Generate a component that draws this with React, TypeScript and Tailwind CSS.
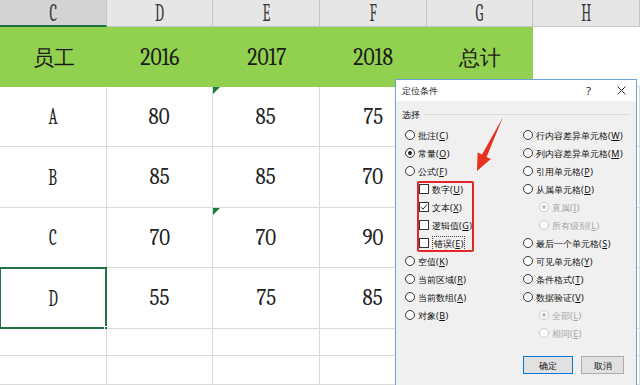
import React from "react";

function Tri() {
  return (
    <svg className="absolute left-0 top-0" width="7" height="7" viewBox="0 0 7 7">
      <polygon points="0,0 7,0 0,7" fill="#1f7a35" />
    </svg>
  );
}

function Cell({ v, tri, sel }: { v?: string; tri?: boolean; sel?: boolean }) {
  const isLetter = v !== undefined && /^[A-D]$/.test(v);
  return (
    <div className="relative flex items-center justify-center bg-white border-r border-b border-[#dadada]">
      {tri && <Tri />}
      {v !== undefined &&
        (isLetter ? (
          <span className="font-serif text-[23px] leading-none text-[#222] inline-block scale-x-65">{v}</span>
        ) : (
          <span className="font-serif text-[22px] leading-none text-[#222] inline-block scale-x-95">{v}</span>
        ))}
      {sel && (
        <>
          <div className="absolute -left-px -top-px -right-px -bottom-px border-2 border-[#217346]" />
          <div className="absolute -right-[3px] -bottom-[3px] w-[5px] h-[5px] bg-[#217346] border border-white" />
        </>
      )}
    </div>
  );
}

function Radio({ checked, disabled }: { checked?: boolean; disabled?: boolean }) {
  return (
    <span
      className={`flex items-center justify-center w-[10px] h-[10px] rounded-full border bg-white shrink-0 ${
        disabled ? "border-[#c8c8c8]" : "border-[#333]"
      }`}
    >
      {checked && <span className={`w-[4px] h-[4px] rounded-full ${disabled ? "bg-[#c0c0c0]" : "bg-[#222]"}`} />}
    </span>
  );
}

function Check({ checked }: { checked?: boolean }) {
  return (
    <span className="flex items-center justify-center w-[10px] h-[10px] border border-[#333] bg-white shrink-0">
      {checked && (
        <svg width="8" height="8" viewBox="0 0 8 8">
          <path d="M1 4.2 L3 6.2 L7 1.5" stroke="#222" strokeWidth="1" fill="none" />
        </svg>
      )}
    </span>
  );
}

function Label({ t, k, disabled, focus }: { t: string; k: string; disabled?: boolean; focus?: boolean }) {
  return (
    <span
      className={`whitespace-nowrap leading-none ${disabled ? "text-[#a6a6a6]" : "text-[#111]"} ${
        focus ? "border border-dotted border-[#444] px-[1px] py-[2px]" : ""
      }`}
    >
      {`${t}(`}
      <span className="underline mx-[0.5px]">{k}</span>
      {")"}
    </span>
  );
}

type Opt = { type: "r" | "c" | "x"; t?: string; k?: string; checked?: boolean; disabled?: boolean; indent?: boolean; focus?: boolean };

const left: Opt[] = [
  { type: "r", t: "批注", k: "C" },
  { type: "r", t: "常量", k: "O", checked: true },
  { type: "r", t: "公式", k: "F" },
  { type: "c", t: "数字", k: "U", indent: true },
  { type: "c", t: "文本", k: "X", checked: true, indent: true },
  { type: "c", t: "逻辑值", k: "G", indent: true },
  { type: "c", t: "错误", k: "E", indent: true, focus: true },
  { type: "r", t: "空值", k: "K" },
  { type: "r", t: "当前区域", k: "R" },
  { type: "r", t: "当前数组", k: "A" },
  { type: "r", t: "对象", k: "B" },
  { type: "x" },
];

const right: Opt[] = [
  { type: "r", t: "行内容差异单元格", k: "W" },
  { type: "r", t: "列内容差异单元格", k: "M" },
  { type: "r", t: "引用单元格", k: "P" },
  { type: "r", t: "从属单元格", k: "D" },
  { type: "r", t: "直属", k: "I", disabled: true, checked: true, indent: true },
  { type: "r", t: "所有级别", k: "L", disabled: true, indent: true },
  { type: "r", t: "最后一个单元格", k: "S" },
  { type: "r", t: "可见单元格", k: "Y" },
  { type: "r", t: "条件格式", k: "T" },
  { type: "r", t: "数据验证", k: "V" },
  { type: "r", t: "全部", k: "L", disabled: true, checked: true, indent: true },
  { type: "r", t: "相同", k: "E", disabled: true, indent: true },
];

function OptRow({ o, indentPx }: { o: Opt; indentPx: string }) {
  if (o.type === "x") return <div className="h-[18px]" />;
  return (
    <div className={`h-[18px] flex items-center gap-[3px] ${o.indent ? indentPx : ""}`}>
      {o.type === "r" ? <Radio checked={o.checked} disabled={o.disabled} /> : <Check checked={o.checked} />}
      <Label t={o.t!} k={o.k!} disabled={o.disabled} focus={o.focus} />
    </div>
  );
}

export default function App() {
  const headers = ["C", "D", "E", "F", "G", "H"];
  const rows: { v: string[]; tri?: boolean }[] = [
    { v: ["A", "80", "85", "75", "240"], tri: true },
    { v: ["B", "85", "85", "70", "240"] },
    { v: ["C", "70", "70", "90", "230"], tri: true },
    { v: ["D", "55", "75", "85", "215"] },
  ];
  return (
    <div className="relative w-[640px] h-[385px] overflow-hidden bg-white">
      <div className="grid grid-cols-[107px_106px_107px_107px_106px_107px] grid-rows-[27px_60px_60px_61px_60px_61px_27px_29px]">
        {headers.map((h, i) => (
          <div
            key={h}
            className={`flex items-center justify-center border-r border-[#c6c6c6] ${
              i === 0 ? "bg-[#d3d3d3] border-b-2 border-b-[#217346]" : "bg-[#e6e6e6] border-b border-b-[#c6c6c6]"
            }`}
          >
            <span className="font-serif text-[24px] leading-none text-[#3a3a3a] inline-block scale-x-60">{h}</span>
          </div>
        ))}
        {["员工", "2016", "2017", "2018", "总计"].map((t, i) => (
          <div key={t} className="flex items-center justify-center bg-[#92d050]">
            {i === 0 || i === 4 ? (
              <span className="font-sans text-[21px] leading-none text-[#1a1a1a]">{t}</span>
            ) : (
              <span className="font-serif text-[24px] leading-none text-[#1a1a1a] inline-block scale-x-90">{t}</span>
            )}
          </div>
        ))}
        <div className="bg-white border-b border-[#dadada]" />
        {rows.map((r, ri) =>
          [...r.v, ""].map((v, ci) => (
            <Cell key={`${ri}-${ci}`} v={v === "" ? undefined : v} tri={r.tri && ci === 2} sel={ri === 3 && ci === 0} />
          ))
        )}
        {[0, 1].map((ri) => headers.map((h) => <Cell key={`e${ri}${h}`} />))}
      </div>

      {/* Dialog */}
      <div className="absolute left-[395px] top-[79px] w-[242px] h-[312px] border border-[#6ea3d8] bg-[#f0f0f0] font-sans text-[9px]">
        <div className="h-[21px] bg-white flex items-center pl-[6px] pr-[10px]">
          <span className="text-[#111] leading-none">定位条件</span>
          <span className="ml-auto text-[11px] leading-none text-[#222] mr-[26px]">?</span>
          <svg width="9" height="9" viewBox="0 0 9 9">
            <path d="M0.5 0.5 L8.5 8.5 M8.5 0.5 L0.5 8.5" stroke="#333" strokeWidth="1" />
          </svg>
        </div>
        <div className="mt-[6px] h-[14px] flex items-center pl-[6px] pr-[6px]">
          <span className="text-[#111] leading-none">选择</span>
          <div className="flex-1 h-px bg-[#dcdcdc] ml-[4px]" />
        </div>
        <div className="mt-[5px] grid grid-cols-[118px_1fr] pl-[9px]">
          <div className="flex flex-col">
            {left.map((o, i) => (
              <OptRow key={i} o={o} indentPx="pl-[14px]" />
            ))}
          </div>
          <div className="flex flex-col">
            {right.map((o, i) => (
              <OptRow key={i} o={o} indentPx="pl-[16px]" />
            ))}
          </div>
        </div>
        <div className="mt-[14px] flex justify-end gap-[8px] pr-[12px]">
          <div className="w-[50px] h-[18px] flex items-center justify-center bg-[#e1e1e1] border border-[#0078d7] text-[#111] leading-none">
            确定
          </div>
          <div className="w-[43px] h-[18px] flex items-center justify-center bg-[#e1e1e1] border border-[#adadad] text-[#111] leading-none">
            取消
          </div>
        </div>
      </div>

      {/* Annotation: red box and arrow */}
      <div className="absolute left-[417px] top-[181px] w-[57px] h-[71px] border-2 border-[#e3262a] rounded-[2px]" />
      <svg className="absolute left-0 top-0" width="640" height="385" viewBox="0 0 640 385">
        <polygon points="503,117 486.6,156.9 490.8,159 477,171 477.6,152.4 482,154.6" fill="#e8321f" />
      </svg>
    </div>
  );
}
